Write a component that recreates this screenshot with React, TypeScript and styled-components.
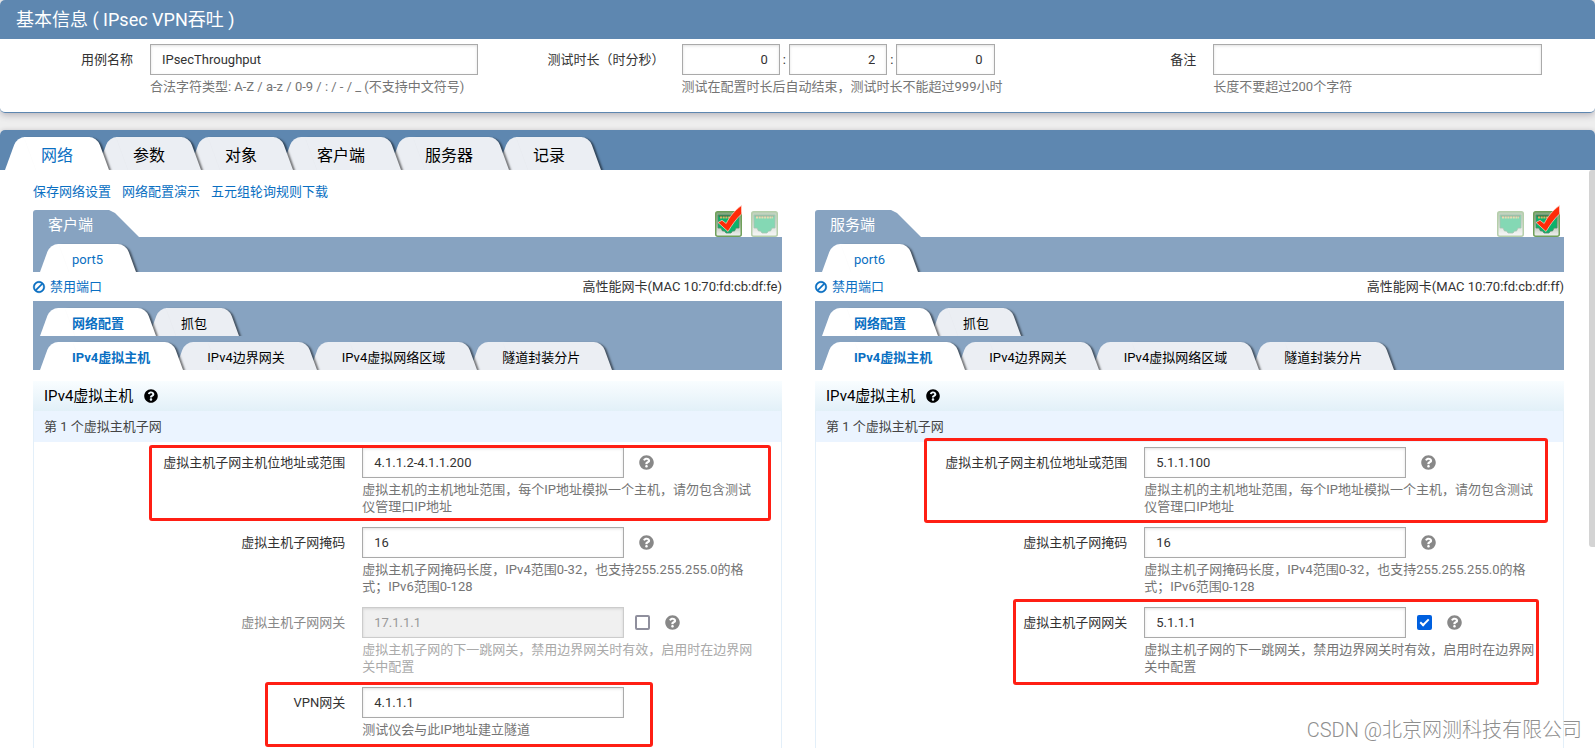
import React, { useId, useState } from "react";
import styled, { createGlobalStyle, css } from "styled-components";
import { FaBan, FaQuestionCircle } from "react-icons/fa";

const FONT = `Roboto, "Noto Sans CJK SC", sans-serif`;
const BLUE = "#5e87b0";
const STEEL = "#87a3c1";
const LINK = "#0a6fc2";

const GlobalStyle = createGlobalStyle`
  *, *::before, *::after { box-sizing: border-box; }
  body { margin: 0; background: #eee; color: #333; font: 13px/17px ${FONT}; }
  button, input { font: inherit; color: inherit; }
  h1, h2, h3, h4, p { margin: 0; font-weight: 400; }
`;

const Page = styled.div`
  position: relative;
  display: flex;
  flex-direction: column;
  gap: 17px;
  height: 100vh;
  overflow: hidden;
`;

const InfoCard = styled.section`
  flex: none;
  background: #fff;
  border-bottom: 1px solid ${BLUE};
  border-radius: 5px;
  box-shadow: 0 2px 7px rgba(60, 50, 70, 0.32);
  overflow: hidden;
`;

const InfoTitle = styled.h1`
  padding: 0 16px;
  background: ${BLUE};
  color: #fff;
  font-size: 18px;
  line-height: 39px;
`;

const InfoGrid = styled.div`
  display: grid;
  grid-template-columns: repeat(3, 1fr);
  padding: 5px 0 17px;
`;

const InfoItem = styled.div`
  display: flex;
`;

const InfoLabel = styled.label`
  flex: 0 0 25%;
  line-height: 31px;
  text-align: right;
`;

const InfoField = styled.div`
  flex: 1;
  padding-left: 17px;
`;

const TextInput = styled.input<{ $width?: string; $end?: boolean }>`
  display: block;
  width: ${(p) => p.$width ?? "100%"};
  height: 31px;
  padding: 0 11px;
  border: 1px solid #aaa;
  border-radius: 0;
  background: #fff;
  box-shadow: inset 0 1px 3px rgba(0, 0, 0, 0.12);
  text-align: ${(p) => (p.$end ? "right" : "left")};
  outline: none;

  &:disabled {
    background: #f0f0f0;
    border-color: #ccc;
    color: #999;
  }
`;

const Duration = styled.div`
  display: flex;
  align-items: center;
  gap: 3px;
  width: 82%;
`;

const Hint = styled.p<{ $muted?: boolean; $width?: string }>`
  width: ${(p) => p.$width ?? "auto"};
  padding-top: 3px;
  color: ${(p) => (p.$muted ? "#aaa" : "#757575")};
`;

const Workspace = styled.section`
  position: relative;
  flex: 1;
  min-height: 0;
  background: #fff;
  border-radius: 5px 5px 0 0;
  box-shadow: 0 0 4px rgba(60, 50, 70, 0.2);
  overflow: hidden;
`;

const TabRow = styled.div<{ $large?: boolean }>`
  display: flex;
  overflow: hidden;
  background: ${(p) => (p.$large ? BLUE : STEEL)};
  padding: ${(p) => (p.$large ? "7px 5px 0" : "7px 7px 0")};
`;

const skewed = css`
  content: "";
  position: absolute;
  z-index: -1;
  top: 0;
  bottom: 0;
  transform-origin: bottom;
`;

const TabButton = styled.button<{ $active: boolean; $large?: boolean; $order: number }>`
  position: relative;
  z-index: ${(p) => 20 - p.$order};
  isolation: isolate;
  height: ${(p) => (p.$large ? 33 : 28)}px;
  margin: 0 ${(p) => (p.$large ? -12 : -7)}px 0 0;
  padding: ${(p) => (p.$large ? "3px 36px 0" : "2px 32px 0")};
  border: 0;
  background: none;
  color: ${(p) => (p.$active ? LINK : "#000")};
  font-size: ${(p) => (p.$large ? 16 : 13)}px;
  white-space: nowrap;
  cursor: pointer;

  &::before,
  &::after {
    ${skewed}
    background: ${(p) => (p.$active ? "#fff" : "#ebeef3")};
  }
  &::before {
    left: 0;
    right: 30%;
    transform: skewX(-20deg);
    border-radius: 8px 0 0 0;
  }
  &::after {
    left: 30%;
    right: 0;
    transform: skewX(20deg);
    border-radius: 0 8px 0 0;
    box-shadow: 2px 1px 2px rgba(0, 0, 0, 0.5);
  }
`;

const TabText = styled.span<{ $bold?: boolean }>`
  font-weight: ${(p) => (p.$bold ? 700 : 400)};
`;

const Body = styled.div`
  padding: 13px 31px 0 33px;
`;

const Links = styled.nav`
  display: flex;
  gap: 11px;
  margin-bottom: 10px;
`;

const Link = styled.a`
  display: inline-flex;
  align-items: center;
  gap: 5px;
  color: ${LINK};
  text-decoration: none;
`;

const DisableIcon = styled(FaBan)`
  transform: scaleX(-1);
  stroke: currentColor;
  stroke-width: 16px;
  overflow: visible;
`;

const Sides = styled.div`
  display: grid;
  grid-template-columns: 1fr 1fr;
  gap: 33px;
`;

const SideHead = styled.header`
  display: flex;
  justify-content: space-between;
  height: 27px;
`;

const SideTitle = styled.h2`
  width: 106px;
  padding-left: 15px;
  background: ${STEEL};
  border-top-left-radius: 3px;
  clip-path: polygon(0 0, 76px 0, 82px 3px, 106px 27px, 0 27px);
  color: #fff;
  font-size: 15px;
  line-height: 31px;
`;

const Ports = styled.div`
  display: flex;
  gap: 9px;
  padding-right: 4px;
`;

const PortButton = styled.button<{ $dim: boolean }>`
  width: 27px;
  height: 27px;
  padding: 0;
  border: 0;
  background: none;
  opacity: ${(p) => (p.$dim ? 0.5 : 1)};

  svg {
    display: block;
    overflow: visible;
  }
`;

const PortInfo = styled.div`
  display: flex;
  justify-content: space-between;
  align-items: center;
  height: 29px;
`;

const SubTabs = styled.div`
  background: ${STEEL};

  ${TabRow} + ${TabRow} {
    padding-top: 6px;
  }
`;

const SectionTitle = styled.h3`
  display: flex;
  align-items: center;
  gap: 11px;
  height: 30px;
  margin-top: 11px;
  padding-left: 11px;
  background: linear-gradient(#f9fdff, #e2f0f8);
  color: #000;
  font-size: 15px;
`;

const Subnet = styled.div`
  height: 420px;
  border: solid #e3eff9;
  border-width: 0 1px;
`;

const SubnetTitle = styled.h4`
  padding-left: 10px;
  background: #ebf4ff;
  color: #444;
  line-height: 31px;
`;

const Rows = styled.div`
  display: grid;
  gap: 12px;
  padding-top: 5px;
`;

const Row = styled.div<{ $muted?: boolean }>`
  display: grid;
  grid-template-columns: 5fr 7fr;
  color: ${(p) => (p.$muted ? "#888" : "#333")};
`;

const RowLabel = styled.label`
  line-height: 31px;
  text-align: right;
`;

const RowField = styled.div`
  min-width: 0;
  padding-left: 17px;
`;

const Controls = styled.div`
  display: flex;
  align-items: center;
`;

const Check = styled.input`
  appearance: none;
  width: 15px;
  height: 15px;
  margin: 0 0 0 11px;
  border: 2px solid #8f8f9d;
  border-radius: 2px;
  background: #fff;

  &:checked {
    display: grid;
    border: 0;
    background: #0060df;
  }
  &:checked::before {
    content: "";
    width: 9px;
    height: 5px;
    margin: 4px 0 0 3px;
    border: solid #fff;
    border-width: 0 0 2px 2px;
    transform: rotate(-45deg);
  }
`;

const HelpButton = styled.button<{ $dark?: boolean }>`
  display: flex;
  margin: 0;
  margin-left: ${(p) => (p.$dark ? 0 : 15)}px;
  padding: 0;
  border: 0;
  background: none;
  color: ${(p) => (p.$dark ? "#000" : "#888")};
  font-size: ${(p) => (p.$dark ? 14 : 15)}px;
`;

const ScrollThumb = styled.div`
  position: absolute;
  top: 40px;
  right: 0;
  width: 6px;
  height: 61%;
  border-radius: 3px 0 0 3px;
  background: #d4d4d4;
`;

const Mark = styled.div<{ $x: number; $y: number; $w: number; $h: number }>`
  position: absolute;
  left: ${(p) => p.$x}px;
  top: ${(p) => p.$y}px;
  width: ${(p) => p.$w}px;
  height: ${(p) => p.$h}px;
  border: 3px solid #ff1f14;
  border-radius: 3px;
  pointer-events: none;
`;

const Watermark = styled.div`
  position: absolute;
  right: 13px;
  bottom: 5px;
  color: #8f8f8f;
  font-size: 20px;
  font-weight: 300;
  line-height: 26px;
  text-shadow: 1px 1px 0 #fff;
`;

type TabsProps = { items: string[]; large?: boolean; bold?: boolean };

function Tabs({ items, large, bold }: TabsProps) {
  const [active, setActive] = useState(0);
  return (
    <TabRow $large={large} role="tablist">
      {items.map((item, i) => (
        <TabButton
          key={item}
          type="button"
          role="tab"
          aria-selected={i === active}
          $active={i === active}
          $large={large}
          $order={i}
          onClick={() => setActive(i)}
        >
          <TabText $bold={bold && i === active}>{item}</TabText>
        </TabButton>
      ))}
    </TabRow>
  );
}

function PortIcon({ checked }: { checked: boolean }) {
  const id = useId();
  return (
    <svg width="27" height="26" viewBox="0 0 27 26" aria-hidden="true">
      <defs>
        <linearGradient id={id} x1="0" y1="0" x2="0" y2="1">
          <stop offset="0" stopColor="#7fa479" />
          <stop offset="0.5" stopColor="#b3bfb0" />
          <stop offset="1" stopColor="#f2f2f2" />
        </linearGradient>
      </defs>
      <rect x="0.75" y="0.75" width="25.5" height="24.5" rx="2" fill={`url(#${id})`} stroke="#6fa05a" strokeWidth="1.5" />
      <path d="M3 4h21v13h-3l-1.500 3h-2l-1.500 2h-5l-1.500-2h-2L6 17H3z" fill="#0cb26b" stroke="#4f8a66" strokeWidth="0.8" />
      <path d="M4 4.500h19v1.500H4z" fill="#4d6b45" />
      <path d="M5 6.500h17" stroke="#d3b765" strokeWidth="1.8" strokeDasharray="2 0.7" />
      {checked && (
        <path
          d="M3 11.5l4-2.2 4.2 3.2C14.500 6 19 0 26.500-5.500V3C21 8 17 14 13 20.500z"
          fill="#ff2a08"
          stroke="#ffd9d0"
          strokeWidth="0.7"
        />
      )}
    </svg>
  );
}

type RowData = { label: string; value: string; hint: string; toggle?: boolean; enabled?: boolean; help?: boolean };

function FormRow({ label, value, hint, toggle, enabled = true, help = true }: RowData) {
  const id = useId();
  const [on, setOn] = useState(enabled);
  return (
    <Row $muted={!on}>
      <RowLabel htmlFor={id}>{label}</RowLabel>
      <RowField>
        <Controls>
          <TextInput id={id} $width="62.5%" defaultValue={value} disabled={!on} />
          {toggle && (
            <Check type="checkbox" aria-label={label} checked={on} onChange={(e) => setOn(e.target.checked)} />
          )}
          {help && (
            <HelpButton type="button" aria-label="帮助">
              <FaQuestionCircle />
            </HelpButton>
          )}
        </Controls>
        <Hint $muted={!on} $width="95%">
          {hint}
        </Hint>
      </RowField>
    </Row>
  );
}

type SideProps = { title: string; port: string; mac: string; ports: boolean[]; rows: RowData[] };

function Side({ title, port, mac, ports, rows }: SideProps) {
  return (
    <article>
      <SideHead>
        <SideTitle>{title}</SideTitle>
        <Ports>
          {ports.map((checked, i) => (
            <PortButton key={i} type="button" aria-label={`port${i + 5}`} $dim={!checked}>
              <PortIcon checked={checked} />
            </PortButton>
          ))}
        </Ports>
      </SideHead>
      <Tabs items={[port]} />
      <PortInfo>
        <Link href="#disable">
          <DisableIcon size={12} />
          禁用端口
        </Link>
        <span>高性能网卡(MAC {mac})</span>
      </PortInfo>
      <SubTabs>
        <Tabs items={["网络配置", "抓包"]} bold />
        <Tabs items={["IPv4虚拟主机", "IPv4边界网关", "IPv4虚拟网络区域", "隧道封装分片"]} bold />
      </SubTabs>
      <SectionTitle>
        IPv4虚拟主机
        <HelpButton type="button" aria-label="帮助" $dark>
          <FaQuestionCircle />
        </HelpButton>
      </SectionTitle>
      <Subnet>
        <SubnetTitle>第 1 个虚拟主机子网</SubnetTitle>
        <Rows>
          {rows.map((row) => (
            <FormRow key={row.label} {...row} />
          ))}
        </Rows>
      </Subnet>
    </article>
  );
}

const HOST_HINT = "虚拟主机的主机地址范围，每个IP地址模拟一个主机，请勿包含测试仪管理口IP地址";
const MASK_HINT = "虚拟主机子网掩码长度，IPv4范围0-32，也支持255.255.255.0的格式；IPv6范围0-128";
const GATEWAY_HINT = "虚拟主机子网的下一跳网关，禁用边界网关时有效，启用时在边界网关中配置";

const clientRows: RowData[] = [
  { label: "虚拟主机子网主机位地址或范围", value: "4.1.1.2-4.1.1.200", hint: HOST_HINT },
  { label: "虚拟主机子网掩码", value: "16", hint: MASK_HINT },
  { label: "虚拟主机子网网关", value: "17.1.1.1", hint: GATEWAY_HINT, toggle: true, enabled: false },
  { label: "VPN网关", value: "4.1.1.1", hint: "测试仪会与此IP地址建立隧道", help: false },
];

const serverRows: RowData[] = [
  { label: "虚拟主机子网主机位地址或范围", value: "5.1.1.100", hint: HOST_HINT },
  { label: "虚拟主机子网掩码", value: "16", hint: MASK_HINT },
  { label: "虚拟主机子网网关", value: "5.1.1.1", hint: GATEWAY_HINT, toggle: true },
];

export default function App() {
  return (
    <>
      <GlobalStyle />
      <Page>
        <InfoCard>
          <InfoTitle>基本信息 ( IPsec VPN吞吐 )</InfoTitle>
          <InfoGrid>
            <InfoItem>
              <InfoLabel htmlFor="case-name">用例名称</InfoLabel>
              <InfoField>
                <TextInput id="case-name" $width="86%" defaultValue="IPsecThroughput" />
                <Hint>合法字符类型: A-Z / a-z / 0-9 / : / - / _ (不支持中文符号)</Hint>
              </InfoField>
            </InfoItem>
            <InfoItem>
              <InfoLabel htmlFor="hours">测试时长（时分秒）</InfoLabel>
              <InfoField>
                <Duration>
                  <TextInput id="hours" $end defaultValue="0" />:
                  <TextInput aria-label="分" $end defaultValue="2" />:
                  <TextInput aria-label="秒" $end defaultValue="0" />
                </Duration>
                <Hint>测试在配置时长后自动结束，测试时长不能超过999小时</Hint>
              </InfoField>
            </InfoItem>
            <InfoItem>
              <InfoLabel htmlFor="remark">备注</InfoLabel>
              <InfoField>
                <TextInput id="remark" $width="86%" />
                <Hint>长度不要超过200个字符</Hint>
              </InfoField>
            </InfoItem>
          </InfoGrid>
        </InfoCard>
        <Workspace>
          <Tabs items={["网络", "参数", "对象", "客户端", "服务器", "记录"]} large />
          <Body>
            <Links>
              <Link href="#save">保存网络设置</Link>
              <Link href="#demo">网络配置演示</Link>
              <Link href="#download">五元组轮询规则下载</Link>
            </Links>
            <Sides>
              <Side title="客户端" port="port5" mac="10:70:fd:cb:df:fe" ports={[true, false]} rows={clientRows} />
              <Side title="服务端" port="port6" mac="10:70:fd:cb:df:ff" ports={[false, true]} rows={serverRows} />
            </Sides>
          </Body>
          <ScrollThumb />
        </Workspace>
        <Mark $x={149} $y={445} $w={622} $h={76} />
        <Mark $x={265} $y={682} $w={388} $h={65} />
        <Mark $x={924} $y={438} $w={624} $h={85} />
        <Mark $x={1013} $y={599} $w={526} $h={86} />
        <Watermark>CSDN @北京网测科技有限公司</Watermark>
      </Page>
    </>
  );
}
